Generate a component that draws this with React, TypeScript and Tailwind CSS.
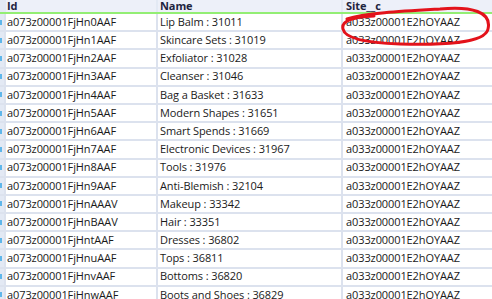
import React from "react";

const rows: [string, string][] = [
  ["a073z00001FjHn0AAF", "Lip Balm : 31011"],
  ["a073z00001FjHn1AAF", "Skincare Sets : 31019"],
  ["a073z00001FjHn2AAF", "Exfoliator : 31028"],
  ["a073z00001FjHn3AAF", "Cleanser : 31046"],
  ["a073z00001FjHn4AAF", "Bag a Basket : 31633"],
  ["a073z00001FjHn5AAF", "Modern Shapes : 31651"],
  ["a073z00001FjHn6AAF", "Smart Spends : 31669"],
  ["a073z00001FjHn7AAF", "Electronic Devices : 31967"],
  ["a073z00001FjHn8AAF", "Tools : 31976"],
  ["a073z00001FjHn9AAF", "Anti-Blemish : 32104"],
  ["a073z00001FjHnAAAV", "Makeup : 33342"],
  ["a073z00001FjHnBAAV", "Hair : 33351"],
  ["a073z00001FjHntAAF", "Dresses : 36802"],
  ["a073z00001FjHnuAAF", "Tops : 36811"],
  ["a073z00001FjHnvAAF", "Bottoms : 36820"],
  ["a073z00001FjHnwAAF", "Boots and Shoes : 36829"],
];

export default function App() {
  return (
    <div
      className="relative w-[492px] h-[299px] overflow-hidden bg-white text-[11px] text-[#1a1a1a] tracking-[-0.1px]"
      style={{ fontFamily: '"Open Sans", "Noto Sans", sans-serif' }}
    >
      <div className="flex h-[14px] bg-[#edf0f9] border-b-2 border-[#93ee74] font-bold text-[#1d2440] leading-[12px]">
        <div className="w-[4px] shrink-0 bg-[#e3e9f4]" />
        <div className="w-[152px] shrink-0 border-l-2 border-[#e3e9f4] pl-[1px] flex items-start">Id</div>
        <div className="w-[185px] shrink-0 border-l-2 border-[#e3e9f4] pl-[2px] flex items-start">Name</div>
        <div className="flex-1 border-l-2 border-[#e3e9f4] pl-[3px] flex items-start">Site__c</div>
      </div>
      {rows.map(([id, name]) => (
        <div key={id} className="flex h-[18.2px] border-b-2 border-[#dce2ee]">
          <div className="w-[4px] shrink-0 bg-[#e3e9f4] flex items-center">
            <div className="w-[2px] h-[5px] bg-[#5fb6ea]" />
          </div>
          <div className="w-[152px] shrink-0 border-l-2 border-[#dce2ee] pl-[1px] flex items-center">{id}</div>
          <div className="w-[185px] shrink-0 border-l-2 border-[#dce2ee] pl-[2px] flex items-center">{name}</div>
          <div className="flex-1 border-l-2 border-[#dce2ee] pl-[3px] flex items-center">a033z00001E2hOYAAZ</div>
        </div>
      ))}
      <svg className="absolute left-0 top-0 pointer-events-none" width="492" height="299">
        <path
          d="M 347 19 C 365 13, 405 11, 440 9 C 472 6, 492 12, 488 29 C 485 44, 440 45, 400 44 C 368 43, 345 39, 343 29 C 341 21, 352 17, 374 16"
          fill="none"
          stroke="#e3121b"
          strokeWidth="3"
          strokeLinecap="round"
          strokeLinejoin="round"
        />
      </svg>
    </div>
  );
}
